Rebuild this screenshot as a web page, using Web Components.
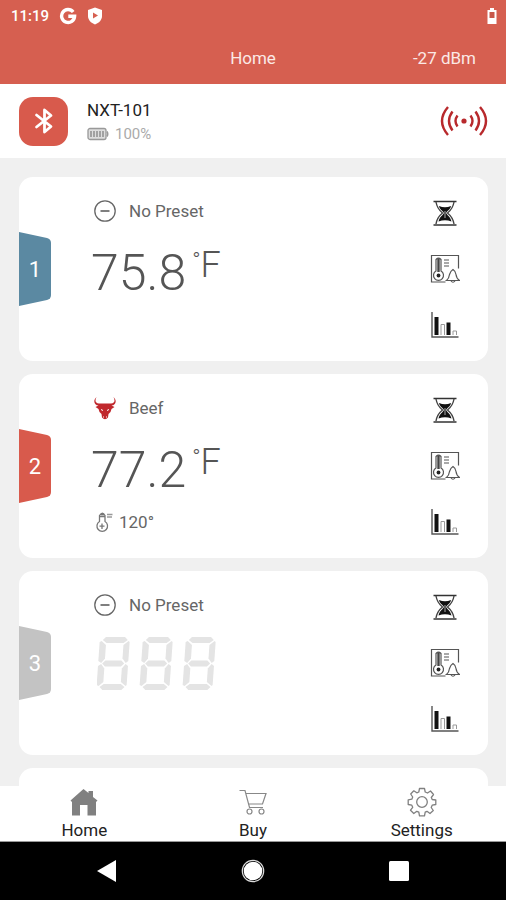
<!DOCTYPE html>
<html lang="en">
<head>
<meta charset="utf-8">
<meta name="viewport" content="width=device-width, initial-scale=1">
<title>Home</title>
<style>
  :root { --brand: #d65f50; --ink: #666; --page: #f0f0f0; }
  html, body { height: 100%; margin: 0; }
  body { font-family: Roboto, "Liberation Sans", sans-serif; font-size: 17px; color: var(--ink); background: var(--page); }
</style>
</head>
<body>
<thermo-app></thermo-app>
<script>
const define = (name, html, setup) => {
  const template = document.createElement('template');
  template.innerHTML = '<style>*{box-sizing:border-box}button{font:inherit;color:inherit;background:none;border:0;padding:0;margin:0;cursor:pointer}</style>' + html;
  customElements.define(name, class extends HTMLElement {
    constructor() {
      super();
      this.attachShadow({ mode: 'open' }).append(template.content.cloneNode(true));
    }
    connectedCallback() { if (setup) setup(this, this.shadowRoot); }
  });
};

/* name: [width, height, markup] */
const segment = (() => {
  const digit = x => `<g transform="translate(${x} 0) skewX(-4)">
    <path d="M6 0H25L28 3L24 6H7L3 3Z"/><path d="M7 23.500H23L26 26.500L23 29.500H7L4 26.500Z"/><path d="M7 47H24L28 50L25 53H6L3 50Z"/>
    <path d="M0 5L2 4L6.500 8V21.500L3 26L0 24Z"/><path d="M30 5L29 4L24 8V21.500L27.500 26L30 24Z"/>
    <path d="M0 29L3 27L6.500 31.500V45L2 49L0 48Z"/><path d="M30 29L27.500 27L24 31.500V45L29 49L30 48Z"/></g>`;
  return digit(3) + digit(46) + digit(89);
})();
const ICONS = {
  google: [18, 18, '<path d="M14.200 5A6.500 6.500 0 1 0 15.600 9.300H9.300" fill="none" stroke="#fff" stroke-width="3.400"/>'],
  shield: [16, 18, '<path d="M8 0.500L15 3V9C15 13 12 16 8 17.500C4 16 1 13 1 9V3Z" fill="#fff"/><path d="M6 5.500V11.500L11 8.500Z" fill="#d65f50"/>'],
  charge: [12, 18, '<path d="M4 1H8V3H10.500V17H1.500V3H4Z" fill="#fff"/><path d="M3.500 5H8.500V11H3.500Z" fill="#c8584a"/>'],
  bluetooth: [20, 28, '<path d="M2.500 8L17 19.500L10.500 25V3L17 8.500L2.500 20" fill="none" stroke="#fff" stroke-width="2.800" stroke-linejoin="round" stroke-linecap="round"/>'],
  battery: [22, 14, '<rect x="1" y="1.500" width="18" height="11" rx="2" fill="#ddd" stroke="#999" stroke-width="1.300"/><path d="M20 4.500Q21.500 7 20 9.500" fill="none" stroke="#999" stroke-width="1.500"/><path d="M4 4V10M7 4V10M10 4V10M13 4V10M16 4V10" stroke="#888" stroke-width="1.400"/>'],
  signal: [48, 32, '<g fill="none" stroke="#b8292c" stroke-width="2.400"><path d="M17.500 10.500Q13.500 16 17.500 21.500M12.500 6.500Q5.500 16 12.500 25.500M8 2Q-4 16 8 30M30.500 10.500Q34.500 16 30.500 21.500M35.500 6.500Q42.500 16 35.500 25.500M40 2Q52 16 40 30"/></g><circle cx="24" cy="16" r="2.600" fill="#b8292c"/>'],
  none: [24, 24, '<circle cx="12" cy="12" r="10.200" fill="none" stroke="#666" stroke-width="1.300"/><path d="M7.500 12H16.500" stroke="#555" stroke-width="1.700"/>'],
  bull: [24, 26, '<path d="M3.500 2C1.500 6 2.500 8 6 8.500H18C21.500 8 22.500 6 20.500 2C24.500 6 22.500 10 18.500 10.500L21.500 12L18.500 14L17.500 17L15.500 19L15 22.500Q12 26 9 22.500L8.500 19L6.500 17L5.500 14L2.500 12L5.500 10.500C1.500 10-0.500 6 3.500 2Z" fill="#c0272c"/><path d="M8 14.500L10 15.500M16 14.500L14 15.500M10 22H11M13 22H14" stroke="#fff" stroke-width="1"/>'],
  probe: [20, 22, '<g fill="none" stroke="#777" stroke-width="1.300"><path d="M5.500 4.500Q8.500 0 11 4.500V10.500A5.300 5.300 0 1 1 5.500 10.500Z"/><path d="M8 12.500V18M5.500 15.200H10.500M5.500 5.500H11M7 3.500H10"/><path d="M13 3.500H18.500M13 6H18" stroke="#999"/></g>'],
  hourglass: [26, 28, '<path d="M1.500 2.500H24.500M1.500 26H24.500" stroke="#333" stroke-width="1.600"/><path d="M4 3C5 9 8 12 10.500 14C8 16 5 19 4 25M22 3C21 9 18 12 15.500 14C18 16 21 19 22 25" fill="none" stroke="#444" stroke-width="1.400"/><path d="M7 7Q13 9.500 19 7C18.500 10.500 15 12 14 14C15 16 18.500 18 19.500 22.500Q13 20 6.500 22.500C7.500 18 11 16 12 14C11 12 7.500 10.500 7 7Z" fill="#111"/><path d="M13 12V19" stroke="#aaa" stroke-width="1"/>'],
  alarm: [30, 30, '<g fill="none" stroke="#555" stroke-width="1.200"><path d="M28.500 14.500V1.500H1.500V28H15.500"/><path d="M6 5.500Q8.500 3 11 5.500V17A5 5 0 1 1 6 17Z"/><path d="M14 6H19M14 9H19M14 12H19"/><path d="M16.500 26.500Q19 24.500 19.500 20.500Q20.500 17 23 15.500Q25.500 17 26 20.500Q26.500 24.500 29.500 26.500ZM21 27Q23 29.500 25 27"/></g><path d="M8.500 5V18" stroke="#444" stroke-width="2.400"/><circle cx="8.500" cy="21.500" r="1.900" fill="#222"/>'],
  chart: [30, 28, '<path d="M2 1V26H28.500" fill="none" stroke="#555" stroke-width="1.400"/><path d="M4.500 6H8.500V24H4.500ZM16.500 11.500H20.500V24H16.500Z" fill="#111"/><path d="M11 24V13.500H14.500V24M23 24V20H26.500V24" fill="none" stroke="#999"/>'],
  segments: [122, 54, `<g fill="#e4e4e4">${segment}</g>`],
  tabshape: [32, 74, '<path d="M0 0L28 6Q32 7 32 11V63Q32 67 28 68L0 74Z" fill="currentColor"/>'],
  home: [28, 28, '<path d="M0.500 12.500L13.500 1L18.500 5V3H23V9L27.500 12.500L26 14V27.500H17.500V17H10V27.500H2V14Z" fill="#808080"/>'],
  cart: [28, 28, '<g fill="none" stroke="#888" stroke-width="1.200"><path d="M0.500 2.500H6L10.500 19.500H24M6.800 5.500H27L23.500 16H9.600"/><circle cx="10.500" cy="23.500" r="2.500"/><circle cx="22.500" cy="23.500" r="2.500"/></g>'],
  gear: [30, 30, '<g fill="none" stroke="#808080" stroke-width="1.300" stroke-linejoin="round"><circle cx="15" cy="15" r="5.300"/><path d="M12.500 1.500H17.500L18.200 5L20.500 6L23.500 4L26.500 7.500L24.300 10.500L25.200 12.500L28.800 13V17.500L25.200 18.200L24.200 20.500L26.300 23.500L23 26.500L20 24.300L18.200 25.200L17.500 28.800H12.500L11.800 25.200L9.800 24.300L6.800 26.500L3.500 23.200L5.700 20.300L4.800 18.200L1.200 17.500V12.800L4.800 12.200L5.700 10L3.700 7L6.800 3.800L9.800 5.800L11.800 5Z"/></g>'],
  back: [22, 24, '<path d="M20 1V23L1 12Z" fill="#fff"/>'],
  circle: [24, 24, '<circle cx="12" cy="12" r="10.700" fill="none" stroke="#ddd" stroke-width="1.200"/><circle cx="12" cy="12" r="9.300" fill="#fff"/>'],
  square: [22, 22, '<rect x="1" y="1" width="20" height="20" rx="1.500" fill="#fff"/>']
};
define('ui-icon', '<style>:host{display:block;flex:none;line-height:0}svg{display:block}</style><span></span>', (el, root) => {
  const [w, h, body] = ICONS[el.getAttribute('name')];
  root.querySelector('span').innerHTML = `<svg width="${w}" height="${h}" viewBox="0 0 ${w} ${h}" aria-hidden="true">${body}</svg>`;
});

define('status-bar', `<style>
  :host{display:flex;align-items:center;height:32px;padding:0 8px 0 11px;background:var(--brand);color:#fff;font-size:15px;font-weight:500}
  ui-icon{margin-left:10px} ui-icon:last-child{margin-left:auto}
</style><time>11:19</time><ui-icon name="google"></ui-icon><ui-icon name="shield"></ui-icon><ui-icon name="charge"></ui-icon>`);

define('app-header', `<style>
  :host{display:grid;grid-template-columns:1fr auto 1fr;align-items:center;height:52px;padding:0 30px;background:var(--brand);color:#fbe9e6}
  h1{grid-column:2;margin:0;font-size:17px;font-weight:400} .level{justify-self:end}
</style><h1><slot></slot></h1><span class="level"><slot name="level"></slot></span>`);

define('device-bar', `<style>
  :host{display:flex;align-items:center;height:74px;padding:0 18px 0 19px;background:#fff}
  .badge{display:grid;place-items:center;width:49px;height:49px;border-radius:14px;background:#d85a4c}
  .info{flex:1;margin-left:19px;padding-top:2px} .name{color:#222;line-height:24px}
  .charge{display:flex;align-items:center;gap:6px;font-size:15px;line-height:24px;color:#aaa}
</style><button class="badge" aria-label="Bluetooth"><ui-icon name="bluetooth"></ui-icon></button>
<div class="info"><div class="name"><slot></slot></div><div class="charge"><ui-icon name="battery"></ui-icon><slot name="charge"></slot></div></div>
<ui-icon name="signal"></ui-icon>`);

define('probe-card', `<style>
  :host{display:grid;grid-template-columns:32px 1fr 44px;flex:none;min-height:184px;padding-right:21px;background:#fff;border-radius:14px;overflow:hidden}
  .tab{display:grid;place-items:center;align-self:center;color:var(--tab)} .tab>*{grid-area:1/1}
  .tab b{font-size:22px;line-height:26px;padding-top:2px;font-weight:400;color:#fff}
  .info{display:grid;grid-template-rows:24px 60px 24px;align-content:start;row-gap:15px;padding:22px 0 0 40px}
  .preset{display:flex;align-items:center;gap:12px;padding-left:2px;justify-self:start}
  .value{display:flex;align-items:flex-start;font-weight:300;color:#555}
  .digits{font-size:50px;line-height:70px} .deg{margin-left:6px;font-size:22px;line-height:46px} .unit{font-size:36px;line-height:54px}
  .value ui-icon{margin-left:6px;margin-top:5px}
  .target{display:flex;align-items:center;gap:5px;padding-left:3px}
  .actions{display:flex;flex-direction:column;justify-content:center;gap:12px}
  .actions button{display:grid;place-items:center;height:44px}
  [hidden]{display:none}
</style>
<div class="tab"><ui-icon name="tabshape"></ui-icon><b></b></div>
<div class="info"><button class="preset"></button><div class="value"></div>
<div class="target"><ui-icon name="probe"></ui-icon><span></span></div></div>
<div class="actions"><button aria-label="Timer"><ui-icon name="hourglass"></ui-icon></button><button aria-label="Temperature alarm"><ui-icon name="alarm"></ui-icon></button><button aria-label="Graph"><ui-icon name="chart"></ui-icon></button></div>`,
(el, root) => {
  const $ = s => root.querySelector(s), at = n => el.getAttribute(n) || '';
  $('.tab b').textContent = at('number');
  $('.preset').innerHTML = `<ui-icon name="${at('icon') || 'none'}"></ui-icon><span>${at('preset')}</span>`;
  $('.value').innerHTML = at('value')
    ? `<span class="digits">${at('value')}</span><span class="deg">°</span><span class="unit">F</span>`
    : '<ui-icon name="segments" role="img" aria-label="No reading"></ui-icon>';
  $('.target span').textContent = at('target');
  $('.target').hidden = !at('target');
});

define('tab-bar', `<style>
  :host{display:grid;grid-template-columns:repeat(3,1fr);height:56px;background:#fff;border-bottom:1px solid #999}
  a{display:flex;flex-direction:column;align-items:center;color:#222;text-decoration:none;line-height:24px}
  ui-icon{height:32px;display:grid;place-items:center}
</style><a href="#home"><ui-icon name="home"></ui-icon>Home</a><a href="#buy"><ui-icon name="cart"></ui-icon>Buy</a><a href="#settings"><ui-icon name="gear"></ui-icon>Settings</a>`);

define('system-nav', `<style>
  :host{display:grid;grid-template-columns:repeat(3,1fr);height:58px;padding:0 34px;background:#000}
  button{display:grid;place-items:center}
</style><button aria-label="Back"><ui-icon name="back"></ui-icon></button><button aria-label="Home screen"><ui-icon name="circle"></ui-icon></button><button aria-label="Recent apps"><ui-icon name="square"></ui-icon></button>`);

define('thermo-app', `<style>
  :host{display:flex;flex-direction:column;height:100vh}
  status-bar,app-header,device-bar,tab-bar,system-nav{flex:none;box-sizing:border-box}
  main{flex:1 1 0;min-height:0;overflow:hidden auto;scrollbar-width:none;display:flex;flex-direction:column;gap:13px;padding:19px 18px 19px 19px}
</style>
<status-bar></status-bar>
<app-header>Home<span slot="level">-27 dBm</span></app-header>
<device-bar>NXT-101<span slot="charge">100%</span></device-bar>
<main>
  <probe-card number="1" preset="No Preset" value="75.8" style="--tab:#5b89a2"></probe-card>
  <probe-card number="2" preset="Beef" icon="bull" value="77.2" target="120°" style="--tab:#d85a4c"></probe-card>
  <probe-card number="3" preset="No Preset" style="--tab:#c3c3c3"></probe-card>
  <probe-card style="--tab:#c3c3c3"></probe-card>
</main>
<tab-bar></tab-bar>
<system-nav></system-nav>`);
</script>
</body>
</html>
